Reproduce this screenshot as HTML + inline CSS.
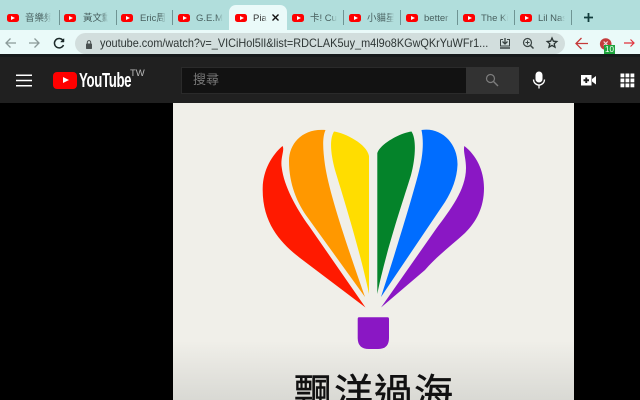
<!DOCTYPE html>
<html><head><meta charset="utf-8">
<style>
*{box-sizing:border-box}
html,body{margin:0;padding:0;background:#000;width:640px;height:400px;overflow:hidden}
#page{width:640px;height:400px;overflow:hidden;position:relative;font-family:"Liberation Sans","Noto Sans CJK TC",sans-serif}
.a{position:absolute}
#tabs{left:0;top:0;width:640px;height:30px;background:#b1dedc}
#act{left:229px;top:5px;width:58px;height:26px;background:#eafaf9;border-radius:7px 7px 0 0}
.sep{position:absolute;top:10px;width:1px;height:15px;background:#6f9493}
.yt{position:absolute;top:13.500px;width:12px;height:8.500px;background:#f00;border-radius:2.500px}
.yt:after{content:"";position:absolute;left:4.500px;top:2.200px;border-left:4px solid #fff;border-top:2px solid transparent;border-bottom:2px solid transparent}
.t{position:absolute;top:11.500px;font-size:9.500px;line-height:13px;color:#48605f;white-space:nowrap;overflow:hidden;-webkit-mask-image:linear-gradient(90deg,#000 75%,transparent 100%);mask-image:linear-gradient(90deg,#000 75%,transparent 100%)}
#bar{left:0;top:30px;width:640px;height:24px;background:#eafaf9}
#url{left:75px;top:33px;width:490px;height:21px;background:#d2dedd;border-radius:11px}
#urlt{left:100px;top:36px;font-size:11.600px;line-height:16px;color:#2d3534;white-space:nowrap;transform:scaleX(.94);transform-origin:0 0}
#line{left:0;top:54px;width:640px;height:3px;background:#16191a}
#yth{left:0;top:57px;width:640px;height:46px;background:#202020}
#video{left:173px;top:103px;width:401px;height:297px;background:linear-gradient(#f0efe9 0,#f0efe9 238px,#d9d9d4 297px)}
</style></head><body><div id="page">
<div class="a" id="tabs"></div>
<div class="a" id="act"></div>
<div class="sep" style="left:59px"></div><div class="sep" style="left:116px"></div><div class="sep" style="left:172px"></div>
<div class="sep" style="left:343px"></div><div class="sep" style="left:400px"></div><div class="sep" style="left:457px"></div><div class="sep" style="left:514px"></div><div class="sep" style="left:571px"></div>

<div class="yt" style="left:6.500px"></div><div class="t" style="left:25px;width:26px">音樂頻</div>
<div class="yt" style="left:64px"></div><div class="t" style="left:83px;width:25px">黃文勳</div>
<div class="yt" style="left:121px"></div><div class="t" style="left:140px;width:26px">Eric周興</div>
<div class="yt" style="left:178px"></div><div class="t" style="left:196px;width:27px">G.E.M.</div>
<div class="yt" style="left:235px"></div><div class="t" style="left:253px;width:14px;color:#333">Pia</div>
<svg class="a" style="left:271px;top:13px" width="9" height="9" viewBox="0 0 9 9"><path d="M1.500 1.500L7.500 7.500M7.500 1.500L1.500 7.500" stroke="#111" stroke-width="1.400"/></svg>
<div class="yt" style="left:292px"></div><div class="t" style="left:310px;width:27px">卡! Cut</div>
<div class="yt" style="left:349px"></div><div class="t" style="left:367px;width:27px">小貓星</div>
<div class="yt" style="left:406px"></div><div class="t" style="left:424px;width:27px">better</div>
<div class="yt" style="left:463px"></div><div class="t" style="left:481px;width:27px">The Ki</div>
<div class="yt" style="left:520px"></div><div class="t" style="left:538px;width:27px">Lil Nas</div>
<svg class="a" style="left:582px;top:11px" width="13" height="13" viewBox="0 0 13 13"><path d="M6.500 2V11M2 6.500H11" stroke="#123c3c" stroke-width="1.800"/></svg>

<div class="a" id="bar"></div>
<svg class="a" style="left:0;top:30px" width="75" height="24" viewBox="0 0 75 24" fill="none">
<path d="M16 13H6M10.500 8.500L6 13L10.500 17.500" stroke="#8b9a99" stroke-width="1.300"/>
<path d="M29 13H39M34.500 8.500L39 13L34.500 17.500" stroke="#8b9a99" stroke-width="1.300"/>
<path d="M63 10.500A4.700 4.700 0 1 0 63.500 15" stroke="#1c2a2a" stroke-width="1.500"/>
<path d="M64 8.500V12H60.500Z" fill="#1c2a2a" stroke="#1c2a2a" stroke-width=".5"/>
</svg>
<div class="a" id="url"></div>
<svg class="a" style="left:84px;top:39px" width="10" height="11" viewBox="0 0 10 11"><rect x="2" y="4.500" width="6" height="5.500" rx=".8" fill="#4a5151"/><path d="M3.300 5V3.300A1.700 1.700 0 0 1 6.700 3.300V5" fill="none" stroke="#4a5151" stroke-width="1"/></svg>
<div class="a" id="urlt">youtube.com/watch?v=_VICiHol5lI&amp;list=RDCLAK5uy_m4l9o8KGwQKrYuWFr1...</div>
<svg class="a" style="left:495px;top:32px" width="145" height="22" viewBox="0 0 145 22" fill="none">
<path d="M5.500 7.500H8M12 7.500H14.500V14H5.500V7.500" stroke="#3a4443" stroke-width="1"/><path d="M10 6V12M7.500 9.500L10 12L12.500 9.500" stroke="#3a4443" stroke-width="1.300"/><path d="M5 16H15" stroke="#3a4443" stroke-width="1.500"/>
<circle cx="32.500" cy="10.500" r="4" stroke="#3a4443" stroke-width="1.200"/><path d="M35.500 13.500L38.500 16.500" stroke="#3a4443" stroke-width="1.500"/><path d="M30.500 10.500H34.500M32.500 8.500V12.500" stroke="#3a4443" stroke-width="1"/>
<path d="M57 6L58.400 9.200L61.800 9.500L59.200 11.800L60 15.200L57 13.400L54 15.200L54.800 11.800L52.200 9.500L55.600 9.200Z" stroke="#2b3534" stroke-width="1.300"/>
<path d="M93 11.500H81.500M86.500 6L81 11.500L86.500 17" stroke="#c53a3a" stroke-width="1.300"/>
<circle cx="110.700" cy="12" r="5.800" fill="#c43c3c"/><path d="M108.700 9.500L112.700 13.500M112.700 9.500L108.700 13.500" stroke="#f2dede" stroke-width="1.200"/>
<path d="M129 11H139M135.500 7.500L139 11L135.500 14.500" stroke="#e0323c" stroke-width="1.200"/>
</svg>
<div class="a" style="left:604px;top:45px;width:11px;height:8.500px;background:#1da53c;color:#fff;font-size:8px;line-height:9px;text-align:center">10</div>
<div class="a" id="line"></div>

<div class="a" id="yth"></div>
<svg class="a" style="left:16px;top:74px" width="16" height="13" viewBox="0 0 16 13"><path d="M0 1.200H16M0 6.500H16M0 11.800H16" stroke="#fff" stroke-width="1.500"/></svg>
<div class="a" style="left:53px;top:72px;width:24px;height:17px;background:#f00;border-radius:4px"></div>
<div class="a" style="left:62.500px;top:77px;border-left:6.500px solid #fff;border-top:3.500px solid transparent;border-bottom:3.500px solid transparent"></div>
<div class="a" style="left:79px;top:69.500px;font-size:20px;line-height:22px;font-weight:bold;color:#fff;letter-spacing:-.5px;transform:scaleX(.66);transform-origin:0 0;white-space:nowrap">YouTube</div>
<div class="a" style="left:130px;top:68px;font-size:9.500px;line-height:11px;color:#bbb">TW</div>

<div class="a" style="left:181px;top:67px;width:286px;height:27px;background:#121212;border:1px solid #2a2a2a;border-right:0"></div>
<div class="a" style="left:193px;top:71px;font-size:13px;line-height:18px;color:#777">搜尋</div>
<div class="a" style="left:466px;top:67px;width:53px;height:27px;background:#323232"></div>
<svg class="a" style="left:484px;top:72px" width="16" height="16" viewBox="0 0 16 16" fill="none"><circle cx="6.500" cy="6.500" r="4" stroke="#7d7d7d" stroke-width="1.200"/><path d="M9.500 9.500L14 14" stroke="#7d7d7d" stroke-width="1.400"/></svg>
<svg class="a" style="left:531px;top:71px" width="16" height="18" viewBox="0 0 16 18" fill="none"><rect x="4.500" y="0.500" width="7" height="11" rx="3.500" fill="#fff"/><path d="M2.500 8.500A5.500 5.500 0 0 0 13.500 8.500M8 14V17.500" stroke="#fff" stroke-width="1.300"/></svg>
<svg class="a" style="left:580px;top:74px" width="17" height="13" viewBox="0 0 17 13"><path fill-rule="evenodd" d="M1 1H11.500V11.500H1ZM5.300 3.500V5.300H3.500V7.200H5.300V9H7.200V7.200H9V5.300H7.200V3.500Z" fill="#fff"/><path d="M12 5L16 2V10.500L12 7.500Z" fill="#fff"/></svg>
<svg class="a" style="left:620px;top:73px" width="15" height="15" viewBox="0 0 15 15" fill="#fff"><rect x="0.500" y="0.500" width="3.800" height="3.800"/><rect x="5.500" y="0.500" width="3.800" height="3.800"/><rect x="10.500" y="0.500" width="3.800" height="3.800"/><rect x="0.500" y="5.500" width="3.800" height="3.800"/><rect x="5.500" y="5.500" width="3.800" height="3.800"/><rect x="10.500" y="5.500" width="3.800" height="3.800"/><rect x="0.500" y="10.500" width="3.800" height="3.800"/><rect x="5.500" y="10.500" width="3.800" height="3.800"/><rect x="10.500" y="10.500" width="3.800" height="3.800"/></svg>

<div class="a" id="video"></div>
<svg class="a" style="left:0;top:0" width="640" height="400" viewBox="0 0 640 400">
<path fill="#ff1a00" d="M282.500 146 C285 150 280 158 281.800 168 C284 186 296 208 309 226 L365.500 307.500 L300 258 C282 244 262 224 262.700 188 C263 170 272 155 282.500 146Z"/>
<path fill="#ff9800" d="M325.500 130 C322 138 323 150 325 165 C329 192 345 240 365 297 L308 218 C297 203 289 184 289 161 C289 143 303 128 325.500 130Z"/>
<path fill="#ffdd00" d="M334 131.500 C345 133 367 144 369 156 L369 294 C360 250 341 190 335 170 C331 155 329 140 334 131.500Z"/>
<path fill="#04832a" d="M411.500 131.500 C400 133 380 144 377.300 153 L377.300 294 C386 250 405 195 411 175 C415 160 417 140 411.500 131.500Z"/>
<path fill="#006dff" d="M421.500 130 C441 127 458 143 457.500 165 C457 178 452 191 445 202 L381 297 C393 260 410 205 418 175 C423 157 424 142 421.500 130Z"/>
<path fill="#8a17c4" d="M464.300 146 C476 155 484 170 484 188 C484 208 476 222 465 233 C452 245 437 256 425 270 L381 307.500 L436 229 C450 210 466 190 466 168 C466 158 463 152 464.300 146Z"/>
<path fill="#8a17c4" d="M359 317.300H387.500Q389 317.300 389 319V338Q389 349 378 349H369Q357.700 349 357.700 338V319Q357.700 317.300 359 317.300Z"/>
</svg>
<div class="a" style="left:294px;top:364px;font-size:39px;line-height:54px;color:#111;white-space:nowrap;letter-spacing:1px;-webkit-text-stroke:.5px #111;font-family:'Noto Sans CJK TC',sans-serif">飄洋過海</div>
</div></body></html>
